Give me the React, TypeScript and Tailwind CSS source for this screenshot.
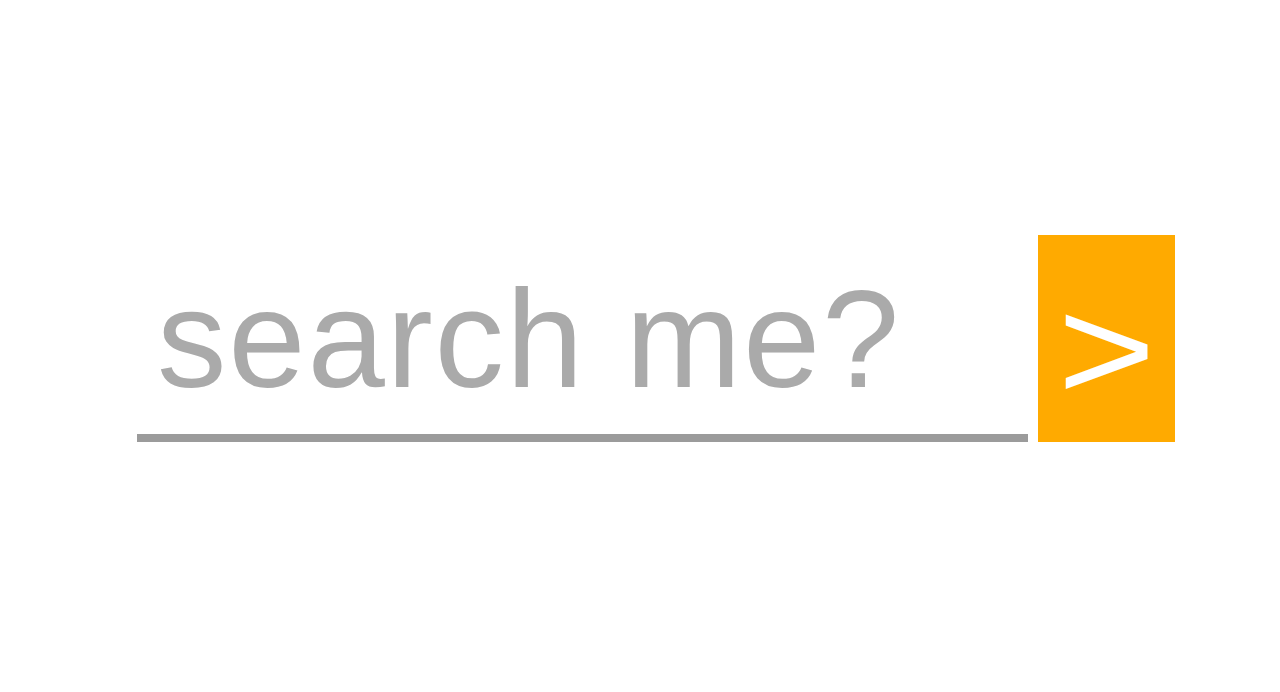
export default function App() {
  return (
    <div className="min-h-[692px] w-full bg-white pl-[137px] pt-[235px] font-['Liberation_Sans',Arial,sans-serif]">
      <div className="flex items-end gap-[10px]">
        {/* input with underline */}
        <div className="flex w-[891px] flex-col">
          <div className="pl-[20px] text-[139px] leading-none tracking-[1.8px] text-[#aaaaaa]">
            search me?
          </div>
          <div className="mt-[26px] h-[8px] w-full bg-[#9b9b9b]" />
        </div>

        {/* submit */}
        <button
          type="button"
          className="flex h-[207px] w-[137px] items-center justify-center bg-[#ffaa00] pt-[22px] text-[146px] leading-none text-white"
        >
          <span className="inline-block scale-x-[1.15]">&gt;</span>
        </button>
      </div>
    </div>
  );
}
